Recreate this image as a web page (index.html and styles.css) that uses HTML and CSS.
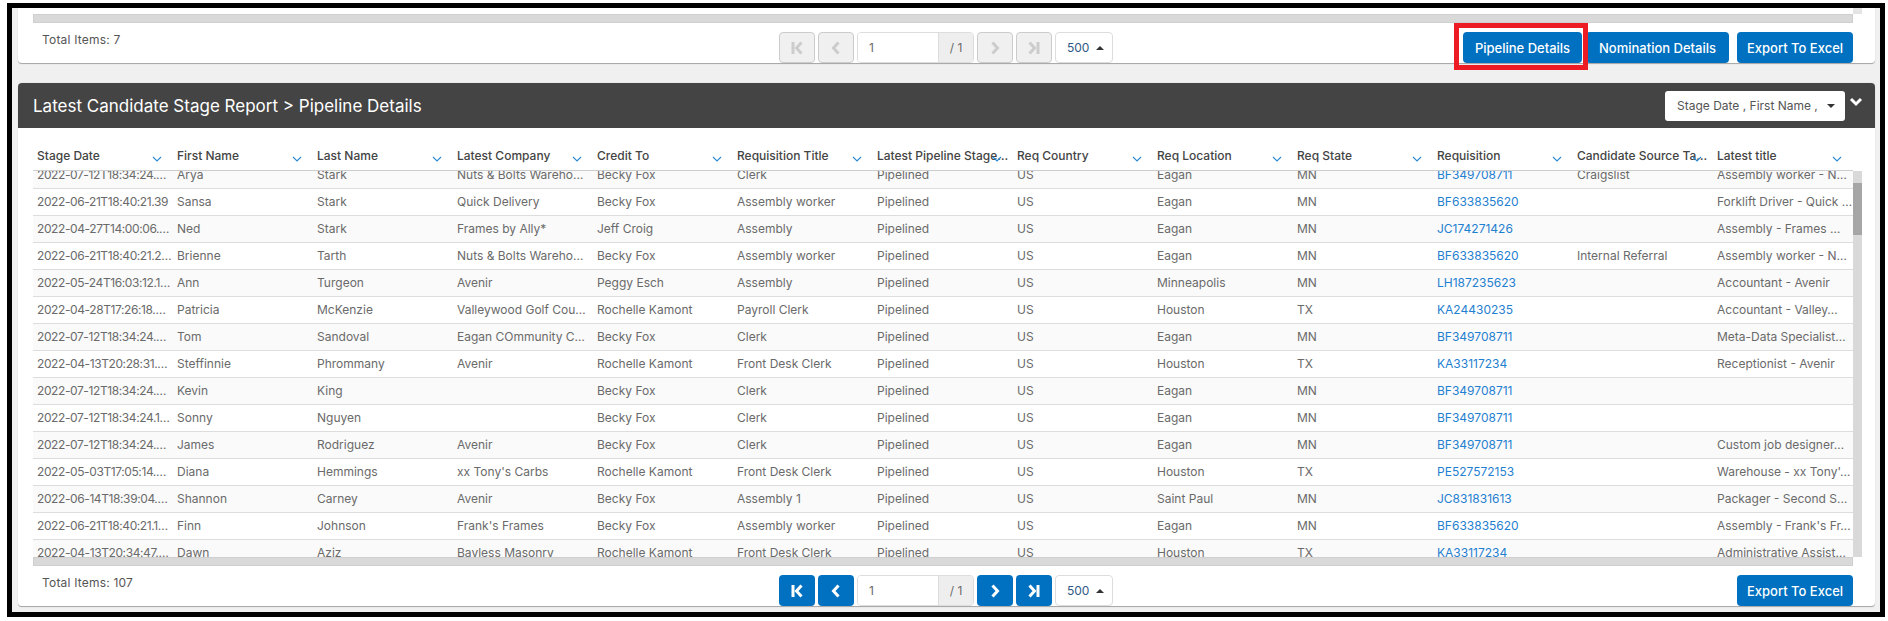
FILE: index.html
```html
<!DOCTYPE html>
<html lang="en">
<head>
    <meta charset="UTF-8">
    <meta name="viewport" content="width=device-width, initial-scale=1.0">
    <title>Latest Candidate Stage Report</title>
    <link rel="stylesheet" href="styles.css">
</head>
<body>
    <svg class="sprites" width="0" height="0">
        <symbol id="i-first" viewBox="0 0 14 14"><rect x="1.5" y="1" width="3" height="12"/><path d="M11.5 1.5 6.5 7l5 5.500" fill="none" stroke="currentColor" stroke-width="3"/></symbol>
        <symbol id="i-prev" viewBox="0 0 14 14"><path d="M9.500 1.500 4.500 7l5 5.500" fill="none" stroke="currentColor" stroke-width="3"/></symbol>
        <symbol id="i-next" viewBox="0 0 14 14"><path d="M4.500 1.500 9.500 7l-5 5.500" fill="none" stroke="currentColor" stroke-width="3"/></symbol>
        <symbol id="i-last" viewBox="0 0 14 14"><rect x="9.500" y="1" width="3" height="12"/><path d="M2.500 1.500 7.500 7l-5 5.500" fill="none" stroke="currentColor" stroke-width="3"/></symbol>
        <symbol id="i-sort" viewBox="0 0 10 6"><path d="M1 1l4 4 4-4" fill="none" stroke="currentColor" stroke-width="1.100"/></symbol>
    </svg>

    <div class="frame">
        <section class="card card-top">
            <div class="stub"></div>
            <div class="hbar"></div>
            <div class="toolbar">
                <div class="total">Total Items: 7</div>
                <div class="pager pager-off">
                    <button class="page-btn"><svg><use href="#i-first"/></svg></button>
                    <button class="page-btn"><svg><use href="#i-prev"/></svg></button>
                    <div class="page-input"><span class="page-num">1</span><span class="page-of">/ 1</span></div>
                    <button class="page-btn"><svg><use href="#i-next"/></svg></button>
                    <button class="page-btn"><svg><use href="#i-last"/></svg></button>
                    <div class="page-size">500 <i class="caret-up"></i></div>
                </div>
                <div class="actions">
                    <button class="btn btn-pipeline">Pipeline Details</button>
                    <button class="btn btn-nomination">Nomination Details</button>
                    <button class="btn btn-export">Export To Excel</button>
                </div>
            </div>
        </section>

        <section class="card card-report">
            <header class="report-head">
                <h2>Latest Candidate Stage Report &gt; Pipeline Details</h2>
                <div class="col-select">Stage Date , First Name , <i class="caret-down"></i></div>
                <svg class="collapse" viewBox="0 0 14 10"><path d="M2 2l5 5 5-5" fill="none" stroke="#fff" stroke-width="3"/></svg>
            </header>

            <table class="grid grid-head">
                <tr>
                    <th>Stage Date<svg class="sort"><use href="#i-sort"/></svg></th>
                    <th>First Name<svg class="sort"><use href="#i-sort"/></svg></th>
                    <th>Last Name<svg class="sort"><use href="#i-sort"/></svg></th>
                    <th>Latest Company<svg class="sort"><use href="#i-sort"/></svg></th>
                    <th>Credit To<svg class="sort"><use href="#i-sort"/></svg></th>
                    <th>Requisition Title<svg class="sort"><use href="#i-sort"/></svg></th>
                    <th>Latest Pipeline Stage…<svg class="sort"><use href="#i-sort"/></svg></th>
                    <th>Req Country<svg class="sort"><use href="#i-sort"/></svg></th>
                    <th>Req Location<svg class="sort"><use href="#i-sort"/></svg></th>
                    <th>Req State<svg class="sort"><use href="#i-sort"/></svg></th>
                    <th>Requisition<svg class="sort"><use href="#i-sort"/></svg></th>
                    <th>Candidate Source Ta…<svg class="sort"><use href="#i-sort"/></svg></th>
                    <th>Latest title<svg class="sort"><use href="#i-sort"/></svg></th>
                </tr>
            </table>

            <div class="grid-wrap">
                <div class="grid-view">
                    <table class="grid grid-body">
                        <tr><td>2022-07-12T18:34:24.…</td><td>Arya</td><td>Stark</td><td>Nuts &amp; Bolts Wareho…</td><td>Becky Fox</td><td>Clerk</td><td>Pipelined</td><td>US</td><td>Eagan</td><td>MN</td><td><a href="#">BF349708711</a></td><td>Craigslist</td><td>Assembly worker - N…</td></tr>
                        <tr><td>2022-06-21T18:40:21.39</td><td>Sansa</td><td>Stark</td><td>Quick Delivery</td><td>Becky Fox</td><td>Assembly worker</td><td>Pipelined</td><td>US</td><td>Eagan</td><td>MN</td><td><a href="#">BF633835620</a></td><td></td><td>Forklift Driver - Quick …</td></tr>
                        <tr><td>2022-04-27T14:00:06.…</td><td>Ned</td><td>Stark</td><td>Frames by Ally*</td><td>Jeff Croig</td><td>Assembly</td><td>Pipelined</td><td>US</td><td>Eagan</td><td>MN</td><td><a href="#">JC174271426</a></td><td></td><td>Assembly - Frames …</td></tr>
                        <tr><td>2022-06-21T18:40:21.2…</td><td>Brienne</td><td>Tarth</td><td>Nuts &amp; Bolts Wareho…</td><td>Becky Fox</td><td>Assembly worker</td><td>Pipelined</td><td>US</td><td>Eagan</td><td>MN</td><td><a href="#">BF633835620</a></td><td>Internal Referral</td><td>Assembly worker - N…</td></tr>
                        <tr><td>2022-05-24T16:03:12.1…</td><td>Ann</td><td>Turgeon</td><td>Avenir</td><td>Peggy Esch</td><td>Assembly</td><td>Pipelined</td><td>US</td><td>Minneapolis</td><td>MN</td><td><a href="#">LH187235623</a></td><td></td><td>Accountant - Avenir</td></tr>
                        <tr><td>2022-04-28T17:26:18.…</td><td>Patricia</td><td>McKenzie</td><td>Valleywood Golf Cou…</td><td>Rochelle Kamont</td><td>Payroll Clerk</td><td>Pipelined</td><td>US</td><td>Houston</td><td>TX</td><td><a href="#">KA24430235</a></td><td></td><td>Accountant - Valley…</td></tr>
                        <tr><td>2022-07-12T18:34:24.…</td><td>Tom</td><td>Sandoval</td><td>Eagan COmmunity C…</td><td>Becky Fox</td><td>Clerk</td><td>Pipelined</td><td>US</td><td>Eagan</td><td>MN</td><td><a href="#">BF349708711</a></td><td></td><td>Meta-Data Specialist…</td></tr>
                        <tr><td>2022-04-13T20:28:31.…</td><td>Steffinnie</td><td>Phrommany</td><td>Avenir</td><td>Rochelle Kamont</td><td>Front Desk Clerk</td><td>Pipelined</td><td>US</td><td>Houston</td><td>TX</td><td><a href="#">KA33117234</a></td><td></td><td>Receptionist - Avenir</td></tr>
                        <tr><td>2022-07-12T18:34:24.…</td><td>Kevin</td><td>King</td><td></td><td>Becky Fox</td><td>Clerk</td><td>Pipelined</td><td>US</td><td>Eagan</td><td>MN</td><td><a href="#">BF349708711</a></td><td></td><td></td></tr>
                        <tr><td>2022-07-12T18:34:24.1…</td><td>Sonny</td><td>Nguyen</td><td></td><td>Becky Fox</td><td>Clerk</td><td>Pipelined</td><td>US</td><td>Eagan</td><td>MN</td><td><a href="#">BF349708711</a></td><td></td><td></td></tr>
                        <tr><td>2022-07-12T18:34:24.…</td><td>James</td><td>Rodriguez</td><td>Avenir</td><td>Becky Fox</td><td>Clerk</td><td>Pipelined</td><td>US</td><td>Eagan</td><td>MN</td><td><a href="#">BF349708711</a></td><td></td><td>Custom job designer…</td></tr>
                        <tr><td>2022-05-03T17:05:14.…</td><td>Diana</td><td>Hemmings</td><td>xx Tony's Carbs</td><td>Rochelle Kamont</td><td>Front Desk Clerk</td><td>Pipelined</td><td>US</td><td>Houston</td><td>TX</td><td><a href="#">PE527572153</a></td><td></td><td>Warehouse - xx Tony'…</td></tr>
                        <tr><td>2022-06-14T18:39:04.…</td><td>Shannon</td><td>Carney</td><td>Avenir</td><td>Becky Fox</td><td>Assembly 1</td><td>Pipelined</td><td>US</td><td>Saint Paul</td><td>MN</td><td><a href="#">JC831831613</a></td><td></td><td>Packager - Second S…</td></tr>
                        <tr><td>2022-06-21T18:40:21.1…</td><td>Finn</td><td>Johnson</td><td>Frank's Frames</td><td>Becky Fox</td><td>Assembly worker</td><td>Pipelined</td><td>US</td><td>Eagan</td><td>MN</td><td><a href="#">BF633835620</a></td><td></td><td>Assembly - Frank's Fr…</td></tr>
                        <tr><td>2022-04-13T20:34:47.…</td><td>Dawn</td><td>Aziz</td><td>Bayless Masonry</td><td>Rochelle Kamont</td><td>Front Desk Clerk</td><td>Pipelined</td><td>US</td><td>Houston</td><td>TX</td><td><a href="#">KA33117234</a></td><td></td><td>Administrative Assist…</td></tr>
                    </table>
                </div>
                <div class="vbar"><div class="vbar-thumb"></div></div>
            </div>
            <div class="hbar"></div>

            <div class="toolbar toolbar-bottom">
                <div class="total">Total Items: 107</div>
                <div class="pager">
                    <button class="page-btn"><svg><use href="#i-first"/></svg></button>
                    <button class="page-btn"><svg><use href="#i-prev"/></svg></button>
                    <div class="page-input"><span class="page-num">1</span><span class="page-of">/ 1</span></div>
                    <button class="page-btn"><svg><use href="#i-next"/></svg></button>
                    <button class="page-btn"><svg><use href="#i-last"/></svg></button>
                    <div class="page-size">500 <i class="caret-up"></i></div>
                </div>
                <div class="actions">
                    <button class="btn btn-export">Export To Excel</button>
                </div>
            </div>
        </section>
    </div>
</body>
</html>
```

FILE: styles.css
```css
* {
    box-sizing: border-box;
}
body {
    margin: 0;
    background-color: #fff;
    font-family: Inter, "Open Sans", sans-serif;
    font-size: 12px;
    color: #6a6a6a;
}
.sprites {
    display: block;
    height: 0;
}
.frame {
    height: 614px;
    margin: 3px 3px 0 7px;
    padding: 0 5px 0 6px;
    border: 5px solid #000;
    background-color: #f0f0f0;
    overflow: hidden;
}
.card {
    background-color: #fff;
    border-bottom: 1px solid #aaa;
    border-radius: 4px;
    box-shadow: 0 0 1px #bbb;
}
.card-top {
    height: 56px;
    padding: 0 22px 0 15px;
    border-radius: 0 0 4px 4px;
}
.stub {
    width: 9px;
    height: 6px;
    margin-left: auto;
    margin-right: -9px;
    background-color: #e4e4e4;
}
.hbar {
    width: 1820px;
    height: 9px;
    background-color: #d9d9d9;
    border: 1px solid #cfcfcf;
}
.toolbar {
    display: grid;
    grid-template-columns: 1fr auto 1fr;
    margin-top: 9px;
}
.total {
    padding: 0 0 0 9px;
    line-height: 16px;
    color: #555;
    letter-spacing: 0.2px;
}
.pager {
    display: flex;
    gap: 3px;
    height: 31px;
    margin-left: 6px;
}
.page-btn {
    width: 36px;
    height: 31px;
    padding: 0;
    background-color: #0070c0;
    color: #fff;
    fill: #fff;
    border: none;
    border-radius: 4px;
    display: flex;
    align-items: center;
    justify-content: center;
}
.page-btn svg {
    width: 14px;
    height: 14px;
}
.pager-off .page-btn {
    background-color: #f0f0f0;
    border: 1px solid #ccc;
    color: #ccc;
    fill: #ccc;
}
.page-input {
    display: flex;
    width: 117px;
    height: 31px;
    border: 1px solid #ddd;
    border-radius: 4px;
    line-height: 29px;
    overflow: hidden;
}
.page-num {
    width: 80px;
    padding-left: 11px;
    background-color: #fff;
}
.page-of {
    flex: 1;
    background-color: #eee;
    text-align: center;
    border-left: 1px solid #ddd;
}
.page-size {
    width: 58px;
    height: 31px;
    padding-left: 11px;
    border: 1px solid #ddd;
    border-radius: 4px;
    line-height: 29px;
    color: #2f5a85;
}
.caret-up {
    display: inline-block;
    margin-left: 3px;
    vertical-align: 2px;
    border-left: 4px solid transparent;
    border-right: 4px solid transparent;
    border-bottom: 4px solid #333;
}
.actions {
    display: flex;
    justify-content: flex-end;
    align-items: flex-start;
}
.btn {
    height: 31px;
    padding: 0;
    background-color: #0070c0;
    color: #fff;
    border: none;
    border-radius: 4px;
    font-family: inherit;
    font-size: 13px;
    font-weight: 500;
}
.btn-pipeline {
    position: relative;
    width: 119px;
    margin-right: 4px;
}
.btn-pipeline::after {
    content: "";
    position: absolute;
    top: -9px;
    right: -6px;
    bottom: -7px;
    left: -9px;
    border: 5px solid #ed1c24;
}
.btn-nomination {
    width: 143px;
    margin-right: 8px;
}
.btn-export {
    width: 116px;
}
.card-report {
    height: 524px;
    margin-top: 19px;
    padding: 0 22px 0 15px;
}
.report-head {
    display: flex;
    align-items: center;
    height: 45px;
    margin: 0 -22px 0 -15px;
    padding: 0 0 0 15px;
    background-color: #444;
    border-radius: 4px 4px 0 0;
}
.report-head h2 {
    flex: 1;
    margin: 0;
    font-size: 17px;
    font-weight: 400;
    color: #fff;
}
.col-select {
    width: 180px;
    height: 30px;
    padding-left: 12px;
    background-color: #fff;
    border-radius: 3px;
    line-height: 30px;
    color: #555;
    white-space: nowrap;
    overflow: hidden;
}
.caret-down {
    display: inline-block;
    margin-left: 6px;
    vertical-align: 2px;
    border-left: 4px solid transparent;
    border-right: 4px solid transparent;
    border-top: 4px solid #333;
}
.collapse {
    width: 14px;
    height: 10px;
    margin: -8px 12px 0 4px;
}
.grid {
    width: 1820px;
    table-layout: fixed;
    border-collapse: collapse;
}
.grid th,
.grid td {
    padding: 0 4px;
    text-align: left;
    white-space: nowrap;
    overflow: hidden;
}
.grid-head {
    height: 43px;
    border-bottom: 1px solid #ccc;
}
.grid-head th {
    position: relative;
    padding-top: 12px;
    font-weight: 500;
    color: #444;
}
.sort {
    position: absolute;
    top: 28px;
    right: 11px;
    width: 10px;
    height: 6px;
    color: #2a8ad4;
}
.grid-wrap {
    display: flex;
    width: 1829px;
    height: 386px;
}
.grid-view {
    width: 1820px;
    overflow: hidden;
}
.grid-body {
    margin-top: -10px;
}
.grid-body tr {
    height: 27px;
    border-bottom: 1px solid #ddd;
}
.grid-body tr:nth-child(odd) {
    background-color: #fafafa;
}
.grid-body td:first-child {
    letter-spacing: -0.4px;
}
.grid-body a {
    color: #1f7fd0;
    text-decoration: none;
}
.vbar {
    width: 9px;
    background-color: #d9d9d9;
}
.vbar-thumb {
    height: 52px;
    margin-top: 12px;
    background-color: #a6a6a6;
}
```
